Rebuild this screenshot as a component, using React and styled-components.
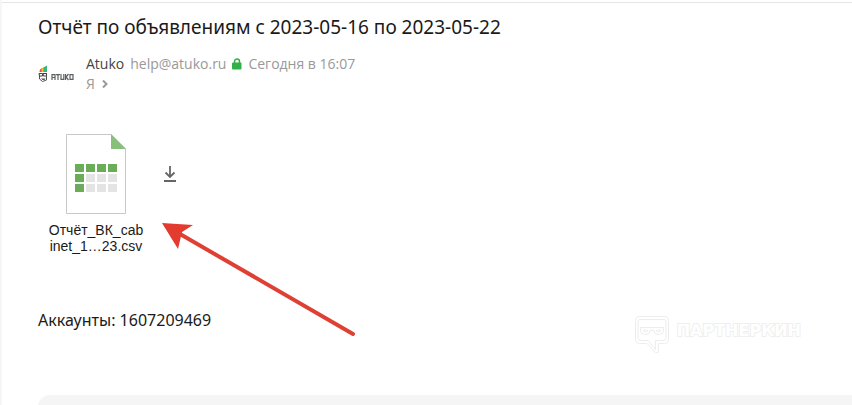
import React from 'react';
import styled, { createGlobalStyle } from 'styled-components';

const GlobalStyle = createGlobalStyle`
    * {
        box-sizing: border-box;
    }
    body {
        margin: 0;
        background: #fff;
        color: #1a1a1a;
        font-family: "Noto Sans", sans-serif;
    }
`;

const Page = styled.main`
    position: relative;
    min-height: 100vh;
    padding: 0 0 0 36px;
    border-left: 2px solid #f6f6f6;
    overflow: hidden;
    &::before {
        content: '';
        display: block;
        height: 1px;
        margin: 2px 0 0 -36px;
        background: #e5e5e5;
    }
`;

const Subject = styled.h1`
    margin: 0;
    padding: 10px 0 13px;
    font-size: 19px;
    line-height: 28px;
    font-weight: 400;
`;

const Header = styled.header`
    display: flex;
    align-items: center;
    gap: 12px;
`;

const Details = styled.div`
    display: flex;
    flex-direction: column;
`;

const Line = styled.div`
    display: flex;
    align-items: center;
    gap: 6px;
    font-family: "Open Sans", sans-serif;
    font-size: 14px;
    line-height: 20px;
    color: #999;
`;

const Sender = styled.span`
    color: #444;
`;

const Address = styled.a`
    color: inherit;
    text-decoration: none;
`;

const Sent = styled.time`
    color: inherit;
`;

const Recipients = styled.button`
    display: flex;
    align-items: center;
    gap: 6px;
    padding: 0;
    border: 0;
    background: none;
    color: inherit;
    font: inherit;
    cursor: pointer;
`;

const Attachments = styled.section`
    position: relative;
    display: flex;
    align-items: flex-start;
    gap: 14px;
    padding: 40px 0 0 8px;
`;

const File = styled.a`
    display: flex;
    flex-direction: column;
    align-items: center;
    gap: 8px;
    width: 100px;
    color: #1a1a1a;
    font-family: "Liberation Sans", Arial, sans-serif;
    font-size: 14px;
    line-height: 16px;
    text-align: center;
    text-decoration: none;
`;

const Download = styled.button`
    display: flex;
    align-items: center;
    justify-content: center;
    width: 20px;
    height: 80px;
    padding: 0;
    border: 0;
    background: none;
    cursor: pointer;
`;

const Pointer = styled.svg`
    position: absolute;
    top: 126px;
    left: 122px;
`;

const Message = styled.p`
    margin: 0;
    padding: 54px 0 63px;
    font-size: 16px;
    line-height: 24px;
`;

const Reply = styled.footer`
    height: 48px;
    margin-bottom: -38px;
    border-radius: 12px 0 0 0;
    background: #f5f5f5;
`;

const Watermark = styled.div`
    position: absolute;
    right: 51px;
    bottom: 51px;
    display: flex;
    gap: 8px;
    color: #fff;
    font-family: "DejaVu Sans", sans-serif;
    font-size: 16px;
    line-height: 30px;
    font-weight: 700;
    -webkit-text-stroke: 2px #efefef;
    paint-order: stroke fill;
`;

const AtukoLogo = () => (
    <svg width="36" height="20" viewBox="0 0 36 20" role="img" aria-label="Atuko">
        <path d="M1.500 8l.5-2.500L4 4v4z" fill="#e8503a" />
        <path d="M3.500 8V4.500L6 3v5z" fill="#f5b92e" />
        <path d="M5.500 8V3.500L9 1.500V8z" fill="#35b57c" />
        <path d="M1.500 9v6l3 2.500L8.500 16V9" fill="#fff" stroke="#555" />
        <path d="M1 9.500h3.500v2.500H1.500zM5 9.500h3.500v2.500H5.500z" fill="#fff" stroke="#444" />
        <path d="M3 14.500h4.500L6.500 16h-2z" fill="#555" />
        <g fill="none" stroke="#5c6063" strokeWidth="1.200">
            <path d="M14 16v-5.400h3V16M14 13.500h3" />
            <path d="M18 10.600h4M20 10.600V16" />
            <path d="M23 10v5.400h2.800V10" />
            <path d="M27.500 10v6M30.500 10l-2.500 3 2.500 3" />
            <path d="M32 10.600h3v4.800h-3z" />
        </g>
    </svg>
);

const LockIcon = () => (
    <svg width="10" height="12" viewBox="0 0 10 12" role="img" aria-label="TLS">
        <path d="M2.500 5V3.500a2.500 2.500 0 0 1 5 0V5" fill="none" stroke="#32b04a" strokeWidth="1.500" />
        <rect y="4.500" width="9.500" height="7" rx="1" fill="#32b04a" />
    </svg>
);

const ChevronIcon = () => (
    <svg width="8" height="10" viewBox="0 0 8 10">
        <path d="M2 1.500L5.500 5 2 8.500" fill="none" stroke="#999" strokeWidth="2" />
    </svg>
);

const cells = [0, 1, 2].flatMap((row) => [0, 1, 2, 3].map((col) => ({ row, col })));

const SheetIcon = () => (
    <svg width="60" height="80" viewBox="0 0 60 80">
        <path d="M.5.5H45L59.500 15v64.500H.5z" fill="#fff" stroke="#c8c8c8" />
        <path d="M45 0l15 15H45z" fill="#88bf7a" />
        {cells.map(({ row, col }) => (
            <rect
                key={`${row}-${col}`}
                x={9 + col * 11}
                y={30 + row * 10}
                width="9"
                height="8"
                fill={row === 0 || col === 0 ? '#69ad57' : '#e4e4e4'}
            />
        ))}
    </svg>
);

const DownloadIcon = () => (
    <svg width="12" height="16" viewBox="0 0 12 16">
        <path d="M6 0v11M1.500 6.500L6 11l4.500-4.500M0 15h12" fill="none" stroke="#666" strokeWidth="1.800" />
    </svg>
);

const BubbleIcon = () => (
    <svg width="34" height="38" viewBox="0 0 34 38" fill="none" stroke="#ededed">
        <path d="M4.500.5h25q4 0 4 4v19q0 4-4 4h-6v7q0 3-3 2L12 27.500H4.500q-4 0-4-4v-19q0-4 4-4z" />
        <path d="M5 3.500h24q2 0 2 2v17q0 2-2 2h-8.500v9L13 24.500H5q-2 0-2-2v-17q0-2 2-2z" />
        <path d="M5.500 11.500h23v3q0 4-4 4H23q-4 0-4-4h-4q0 4-4 4H9.500q-4 0-4-4z" />
        <path d="M8.500 14h4q0 2-2 2t-2-2zM21.500 14h4q0 2-2 2t-2-2z" />
    </svg>
);

export default function App() {
    return (
        <>
            <GlobalStyle />
            <Page>
                <Subject>Отчёт по объявлениям с 2023-05-16 по 2023-05-22</Subject>
                <Header>
                    <AtukoLogo />
                    <Details>
                        <Line>
                            <Sender>Atuko</Sender>
                            <Address href="mailto:help@atuko.ru">help@atuko.ru</Address>
                            <LockIcon />
                            <Sent>Сегодня в 16:07</Sent>
                        </Line>
                        <Line>
                            <Recipients type="button">
                                Я
                                <ChevronIcon />
                            </Recipients>
                        </Line>
                    </Details>
                </Header>
                <Attachments>
                    <File href="#file">
                        <SheetIcon />
                        <span>
                            Отчёт_ВК_cab
                            <br />
                            inet_1…23.csv
                        </span>
                    </File>
                    <Download type="button" aria-label="Скачать">
                        <DownloadIcon />
                    </Download>
                    <Pointer width="200" height="118" viewBox="0 0 200 118">
                        <path d="M20 14L193 114" stroke="#df4034" strokeWidth="4" strokeLinecap="round" />
                        <path d="M2 3l31 2-11 7-4 17z" fill="#e33b30" />
                    </Pointer>
                </Attachments>
                <Message>Аккаунты: 1607209469</Message>
                <Reply />
                <Watermark>
                    <BubbleIcon />
                    <span>ПАРТНЕРКИН</span>
                </Watermark>
            </Page>
        </>
    );
}
